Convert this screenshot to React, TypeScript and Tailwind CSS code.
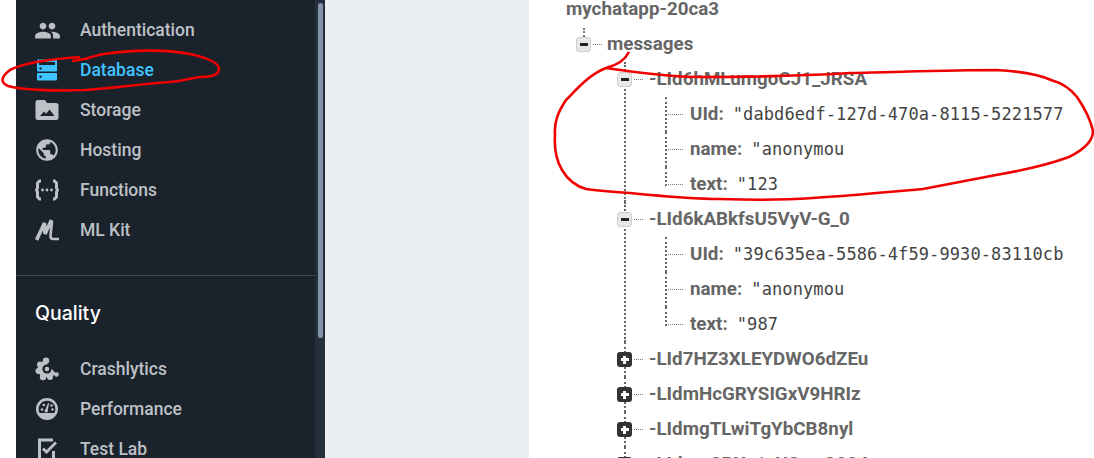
import React from 'react'
import { MdPeople, MdPublic } from 'react-icons/md'

const navFont = "font-['Roboto',sans-serif]"

function DatabaseIcon() {
  return (
    <svg viewBox="0 0 24 24" className="w-6 h-6" fill="currentColor">
      <path fillRule="evenodd" d="M3 1.500h18a1 1 0 0 1 1 1v10a1 1 0 0 1-1 1H3a1 1 0 0 1-1-1v-10a1 1 0 0 1 1-1zm1 2.500v3h16V4H4z" />
      <path fillRule="evenodd" d="M3 15h18a1 1 0 0 1 1 1v5.500a1 1 0 0 1-1 1H3a1 1 0 0 1-1-1V16a1 1 0 0 1 1-1zm2.500 2.500a1.200 1.200 0 1 0 0 2.400 1.200 1.200 0 0 0 0-2.400z" />
      <circle cx="5.500" cy="10.500" r="1.200" fill="#1a222c" />
    </svg>
  )
}

function StorageIcon() {
  return (
    <svg viewBox="0 0 24 24" className="w-6 h-6" fill="currentColor">
      <path fillRule="evenodd" d="M3 2h7l2 3h9a2.500 2.500 0 0 1 2.500 2.500v12A2.500 2.500 0 0 1 21 22H3a2.500 2.500 0 0 1-2.500-2.500v-15A2.500 2.500 0 0 1 3 2zm2 16h14.500l-5-6.500-3.500 4.300-2-2.300z" />
    </svg>
  )
}

function FunctionsIcon() {
  return (
    <svg viewBox="0 0 24 24" className="w-6 h-6" fill="none" stroke="currentColor" strokeWidth="3">
      <path d="M6 3H4.500L2.500 5v5l-1 2 1 2v5l2 2H6" />
      <path d="M18 3h1.500l2 2v5l1 2-1 2v5l-2 2H18" />
      <circle cx="7.500" cy="12" r="1.400" fill="currentColor" stroke="none" />
      <circle cx="12" cy="12" r="1.400" fill="currentColor" stroke="none" />
      <circle cx="16.500" cy="12" r="1.400" fill="currentColor" stroke="none" />
    </svg>
  )
}

function MlKitIcon() {
  return (
    <svg viewBox="0 0 24 24" className="w-6 h-6" fill="none" stroke="currentColor" strokeWidth="3.600">
      <path d="M1.500 22 9.500 5l.5 11 6.500-14" />
      <path d="M17 3l-1.500 15q-.3 3 3 3h5.500" strokeWidth="2.600" />
    </svg>
  )
}

function CrashlyticsIcon() {
  return (
    <svg viewBox="0 0 24 24" className="w-6 h-6" fill="currentColor">
      <circle cx="11" cy="3.800" r="3.200" />
      <circle cx="5" cy="7.500" r="3" />
      <circle cx="3.500" cy="14" r="3" />
      <circle cx="8" cy="20" r="3.200" />
      <circle cx="15" cy="20" r="3" />
      <circle cx="21.500" cy="17.500" r="2.300" />
      <path d="M11 4a8 8 0 0 0-1 16h6l5-3-4-5h-3z" />
      <path d="M15 8h4l-2 4h-3z" fill="#1a222c" />
      <circle cx="12" cy="12" r="4.600" fill="#1a222c" />
      <circle cx="12" cy="12" r="2.300" />
    </svg>
  )
}

function PerformanceIcon() {
  return (
    <svg viewBox="0 0 24 24" className="w-6 h-6" fill="currentColor">
      <path fillRule="evenodd" d="M12 1a11 11 0 1 1 0 22 11 11 0 0 1 0-22zm0 2.800A8.300 8.300 0 0 0 4.600 16h14.800A8.300 8.300 0 0 0 12 3.800z" />
      <path d="M13 6l1.200.3-1.400 6.700a1.700 1.700 0 1 1-2.300-.8z" />
      <circle cx="7" cy="12.500" r="1.300" />
      <circle cx="8.800" cy="8" r="1.300" />
      <circle cx="16.500" cy="8.500" r="1.300" />
      <circle cx="17.500" cy="12.500" r="1.300" />
    </svg>
  )
}

function TestLabIcon() {
  return (
    <svg viewBox="0 0 24 24" className="w-6 h-6" fill="none" stroke="currentColor" strokeWidth="3">
      <path d="M18 3H4.500v20h14v-9" />
      <path d="M8 11.500l3.500 3.500L21 5.500" strokeWidth="2.800" />
    </svg>
  )
}

type NavItem = { label: string; icon: React.ReactNode; active?: boolean }

const buildItems: NavItem[] = [
  { label: 'Authentication', icon: <MdPeople className="w-[27px] h-[27px]" /> },
  { label: 'Database', icon: <DatabaseIcon />, active: true },
  { label: 'Storage', icon: <StorageIcon /> },
  { label: 'Hosting', icon: <MdPublic className="w-[26px] h-[26px]" /> },
  { label: 'Functions', icon: <FunctionsIcon /> },
  { label: 'ML Kit', icon: <MlKitIcon /> },
]

const qualityItems: NavItem[] = [
  { label: 'Crashlytics', icon: <CrashlyticsIcon /> },
  { label: 'Performance', icon: <PerformanceIcon /> },
  { label: 'Test Lab', icon: <TestLabIcon /> },
]

function NavRow({ label, icon, active }: NavItem) {
  return (
    <div className={`flex items-center h-10 pl-[15px] shrink-0 ${active ? 'text-[#40c4ff]' : 'text-[#bdc1c6]'}`}>
      <span className="w-[32px] flex justify-center shrink-0">{icon}</span>
      <span className="ml-[17px] text-[17.500px] font-medium">{label}</span>
    </div>
  )
}

function Sidebar() {
  return (
    <aside className={`flex w-[309px] h-full bg-[#1a222c] ${navFont}`}>
      <div className="w-[299px] pt-[10px] flex flex-col overflow-hidden">
        {buildItems.map(item => <NavRow key={item.label} {...item} />)}
        <div className="mt-[25px] h-px bg-[#3c434e] shrink-0" />
        <div className="pl-[19px] mt-[24px] h-[26px] leading-[26px] text-[19.500px] font-medium text-white shrink-0 font-['Inter',sans-serif]">Quality</div>
        <div className="mt-[23px] flex flex-col">
          {qualityItems.map(item => <NavRow key={item.label} {...item} />)}
        </div>
      </div>
      {/* scrollbar */}
      <div className="w-[10px] h-full bg-[#252e3b] pl-[3px] pt-[3px]">
        <div className="w-[5px] h-[335px] rounded-full bg-[#8494ad]" />
      </div>
    </aside>
  )
}

function Toggle({ open }: { open: boolean }) {
  if (open) {
    return (
      <span className="relative w-[15px] h-[15px] rounded-[3px] bg-[#e8e8e8] border border-[#cfcfcf] flex items-center justify-center shrink-0">
        <span className="w-[8px] h-[3px] bg-[#222]" />
      </span>
    )
  }
  return (
    <span className="relative w-[15px] h-[15px] rounded-[3px] bg-[#333] flex items-center justify-center shrink-0">
      <span className="absolute w-[8px] h-[3px] bg-white" />
      <span className="absolute w-[3px] h-[8px] bg-white" />
    </span>
  )
}

function Leaf({ name, value, last }: { name: string; value: string; last?: boolean }) {
  return (
    <div className="relative flex items-center h-[35px] pl-[25px] w-[399px] overflow-hidden">
      <span className={`absolute left-0 top-0 border-l-2 border-dotted border-[#666] ${last ? 'h-[19px]' : 'h-[35px]'}`} />
      <span className="absolute left-0 top-[17px] w-[18px] border-t border-dotted border-[#777]" />
      <span className="font-bold text-[#666] text-[18.800px] shrink-0">{name}:</span>
      <span className="ml-[9px] font-['DejaVu_Sans_Mono',monospace] text-[17px] tracking-[0.1px] text-[#444] whitespace-nowrap">{value}</span>
    </div>
  )
}

type Entry = { id: string; children?: { name: string; value: string }[] }

const entries: Entry[] = [
  {
    id: '-LId6hMLumgoCJ1_JRSA',
    children: [
      { name: 'UId', value: '"dabd6edf-127d-470a-8115-5221577' },
      { name: 'name', value: '"anonymou' },
      { name: 'text', value: '"123' },
    ],
  },
  {
    id: '-LId6kABkfsU5VyV-G_0',
    children: [
      { name: 'UId', value: '"39c635ea-5586-4f59-9930-83110cb' },
      { name: 'name', value: '"anonymou' },
      { name: 'text', value: '"987' },
    ],
  },
  { id: '-LId7HZ3XLEYDWO6dZEu' },
  { id: '-LIdmHcGRYSIGxV9HRIz' },
  { id: '-LIdmgTLwiTgYbCB8nyl' },
  { id: '-LIdmoCBXs1sYGxwO924' },
]

function TreeEntry({ entry }: { entry: Entry }) {
  return (
    <div className="relative">
      <span className="absolute left-[7px] top-0 bottom-0 border-l-2 border-dotted border-[#666]" />
      <div className="relative flex items-center h-[35px]">
        <Toggle open={!!entry.children} />
        <span className="w-[9px] ml-[2px] border-t border-dotted border-[#777]" />
        <span className="ml-[6px] font-bold text-[#666] text-[18.800px] whitespace-nowrap">{entry.id}</span>
      </div>
      {entry.children && (
        <div className="ml-[48px]">
          {entry.children.map((c, i) => (
            <Leaf key={c.name} name={c.name} value={c.value} last={i === entry.children!.length - 1} />
          ))}
        </div>
      )}
    </div>
  )
}

function DataTree() {
  return (
    <section className="flex-1 h-full bg-white pl-[37px] font-['Roboto',sans-serif] overflow-hidden">
      <div className="h-[19px] leading-[18px] font-bold text-[#666] text-[18.800px] whitespace-nowrap">mychatapp-20ca3</div>
      <div className="relative w-[498px] overflow-hidden">
        <div className="relative flex items-center h-[35px] mt-[8px] ml-[10px]">
          <span className="absolute left-[7px] top-[1px] h-[9px] border-l-2 border-dotted border-[#777]" />
          <Toggle open />
          <span className="w-[9px] ml-[2px] border-t border-dotted border-[#777]" />
          <span className="ml-[5px] font-bold text-[#666] text-[18.800px]">messages</span>
        </div>
        <div className="ml-[51px] w-[447px] overflow-hidden">
          {entries.map(e => <TreeEntry key={e.id} entry={e} />)}
        </div>
      </div>
    </section>
  )
}

// hand drawn annotation on top of the screenshot
function RedMarks() {
  return (
    <svg className="absolute inset-0 pointer-events-none" width="1094" height="458" fill="none" stroke="#f00000" strokeWidth="2.600">
      <path d="M72 61 C85 60 92 56 104 54 C130 50 165 49 190 54 C208 58 219 63 219 69 C219 75 212 77 200 77 C190 78 185 81 170 82 C140 84 115 88 85 90 C55 91 20 90 8 86 C-1 82 2 76 10 70 C25 62 50 59 80 57" />
      <path d="M629 52 C625 60 618 65 606 68 C590 74 578 88 566 100 C558 112 554 122 555 135 C554 150 556 160 562 170 C568 180 575 186 586 189 C600 191 615 192 630 193 C660 196 690 199 721 199 C750 200 785 200 813 198 C850 196 885 192 923 189 C950 184 975 179 996 175 C1025 170 1050 164 1069 157 C1083 150 1093 142 1093 131 C1090 118 1084 107 1077 97 C1070 88 1062 83 1051 80 C1035 73 1015 71 996 70 C950 70 900 72 850 73 C800 76 750 77 700 77 C670 77 640 73 606 68" />
    </svg>
  )
}

export default function App() {
  return (
    <div className="relative flex w-[1094px] h-[458px] overflow-hidden bg-white">
      <div className="w-4 h-full bg-white shrink-0" />
      <Sidebar />
      <div className="w-[204px] h-full bg-[#eceff1] shrink-0" />
      <DataTree />
      <RedMarks />
    </div>
  )
}
